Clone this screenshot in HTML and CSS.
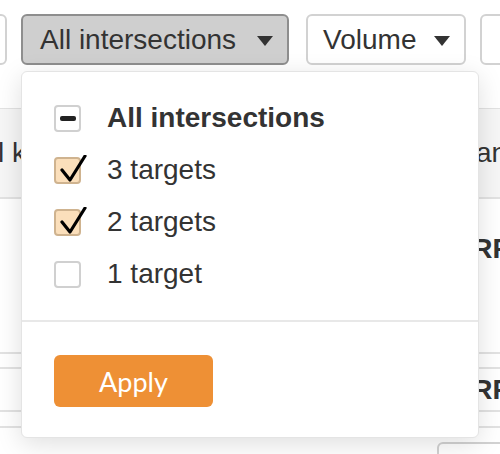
FILE: index.html
```html
<!DOCTYPE html>
<html>
<head>
<meta charset="utf-8">
<link rel="stylesheet" href="styles.css">
</head>
<body>
<div class="toolbar">
  <div class="btn btn-edge"></div>
  <div class="btn btn-active">
    <span>All intersections</span>
    <svg class="caret" width="16" height="10" viewBox="0 0 16 10"><path d="M0 0H16L8 10Z" fill="#333"/></svg>
  </div>
  <div class="btn btn-volume">
    <span>Volume</span>
    <svg class="caret" width="16" height="10" viewBox="0 0 16 10"><path d="M0 0H16L8 10Z" fill="#333"/></svg>
  </div>
  <div class="btn btn-edge"></div>
</div>

<div class="table">
  <div class="row head">
    <div class="cell">Total keywords</div>
    <div class="cell">Brand</div>
  </div>
  <div class="row tall">
    <div class="cell"></div>
    <div class="cell strong top">SERP</div>
  </div>
  <div class="row thin"></div>
  <div class="row mid">
    <div class="cell"></div>
    <div class="cell strong">SERP</div>
  </div>
  <div class="row thin2"></div>
  <div class="row foot">
    <div class="cell"></div>
    <div class="cell"><div class="mini-btn"></div></div>
  </div>
</div>

<div class="dropdown">
  <div class="options">
    <div class="option">
      <span class="box"><span class="minus"></span></span>
      <span class="label bold">All intersections</span>
    </div>
    <div class="option">
      <span class="box checked">
        <svg class="tick" width="34" height="30" viewBox="0 0 34 30"><path d="M6 15L14 25L29 1" fill="none" stroke="#000" stroke-width="3.2" stroke-linecap="round" stroke-linejoin="round"/></svg>
      </span>
      <span class="label">3 targets</span>
    </div>
    <div class="option">
      <span class="box checked">
        <svg class="tick" width="34" height="30" viewBox="0 0 34 30"><path d="M6 15L14 25L29 1" fill="none" stroke="#000" stroke-width="3.2" stroke-linecap="round" stroke-linejoin="round"/></svg>
      </span>
      <span class="label">2 targets</span>
    </div>
    <div class="option">
      <span class="box"></span>
      <span class="label">1 target</span>
    </div>
  </div>
  <div class="footer">
    <button class="apply">Apply</button>
  </div>
</div>
</body>
</html>
```
FILE: styles.css
```css
* { box-sizing: border-box; }
html, body {
  margin: 0;
  width: 500px;
  height: 454px;
  overflow: hidden;
  background: #fff;
}
body {
  position: relative;
  font-family: "Liberation Sans", Arial, sans-serif;
  color: #333;
}
.toolbar {
  display: flex;
  gap: 14px;
  padding-top: 14px;
  margin-left: -93px;
}
.btn {
  flex: none;
  height: 51px;
  display: flex;
  align-items: center;
  gap: 21px;
  padding: 0 15px 0 15px;
  border: 2px solid #d2d2d2;
  border-radius: 6px;
  background: #fff;
  font-size: 28px;
  line-height: 1;
  white-space: nowrap;
}
.btn-edge { width: 100px; }
.btn-active {
  background: #cfcfcf;
  border-color: #8e8e8e;
  padding: 0 14px 0 17px;
  margin-right: 3px;
}
.btn-volume {
  gap: 17px;
  padding: 0 14px 0 15px;
}
.caret { flex: none; margin-top: 2px; }

.table {
  margin-top: 43px;
  margin-left: -55px;
  width: 640px;
  border-top: 1px solid #e2e2e2;
}
.row {
  display: grid;
  grid-template-columns: 503px 1fr;
  align-items: center;
  border-bottom: 2px solid #e2e2e2;
  font-size: 28px;
}
.row.head { height: 90px; background: #f6f6f6; }
.row.tall { height: 155px; align-items: start; }
.row.thin { height: 15px; }
.row.mid { height: 43px; }
.row.thin2 { height: 16px; }
.row.foot { height: 40px; align-items: start; border-bottom: none; }
.cell { white-space: nowrap; }
.strong { font-weight: bold; margin-left: -13px; }
.top { padding-top: 34px; }
.mini-btn {
  margin-top: 14px;
  margin-left: -11px;
  width: 120px;
  height: 40px;
  border: 2px solid #d2d2d2;
  border-radius: 6px;
}

.dropdown {
  position: absolute;
  left: 21px;
  top: 71px;
  width: 458px;
  height: 367px;
  background: #fff;
  border: 1px solid #e4e4e4;
  border-radius: 6px;
  box-shadow: 0 6px 26px rgba(0, 0, 0, 0.13);
}
.options {
  padding: 20px 0 20px 32px;
  border-bottom: 2px solid #e8e8e8;
}
.option {
  height: 52px;
  display: flex;
  align-items: center;
  gap: 26px;
}
.box {
  position: relative;
  flex: none;
  width: 27px;
  height: 27px;
  border: 2px solid #d0d0d0;
  border-radius: 4px;
  background: #fff;
  display: flex;
  align-items: center;
  justify-content: center;
}
.box.checked {
  background: #fbdfbb;
  border-color: #cfb38f;
}
.minus {
  width: 16px;
  height: 5px;
  border-radius: 2px;
  background: #222;
}
.tick {
  position: absolute;
  left: 0;
  top: -4px;
}
.label {
  font-size: 28px;
  line-height: 1;
  color: #333;
}
.label.bold { font-weight: bold; }
.footer {
  padding: 33px 0 0 32px;
}
.apply {
  width: 159px;
  height: 52px;
  border: none;
  border-radius: 6px;
  background: #ee9035;
  color: #fff;
  font-family: Lato, "Noto Sans", sans-serif;
  font-size: 27px;
  padding: 0;
}
```
